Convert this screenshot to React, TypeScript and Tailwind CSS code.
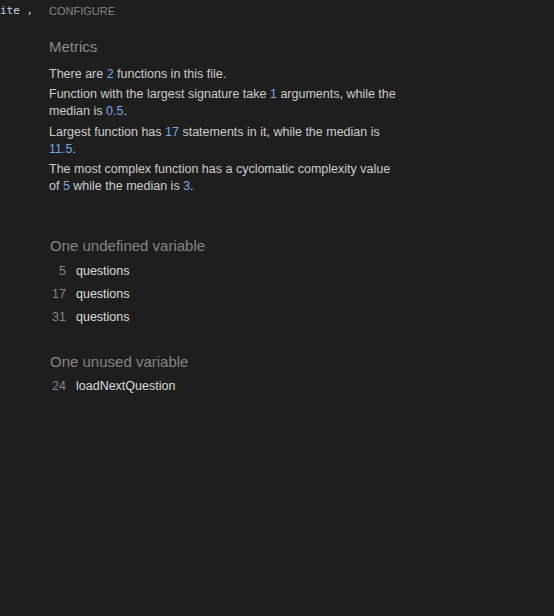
import type React from "react";

const sans = "font-['Liberation_Sans','Helvetica_Neue',Arial,sans-serif]";

const Num = ({ children }: { children: React.ReactNode }) => (
  <span className="text-[#75a7e4]">{children}</span>
);

interface Item {
  line: number;
  name: string;
}

const undefinedVars: Item[] = [
  { line: 5, name: "questions" },
  { line: 17, name: "questions" },
  { line: 31, name: "questions" },
];

const unusedVars: Item[] = [{ line: 24, name: "loadNextQuestion" }];

const VarList = ({ title, items }: { title: string; items: Item[] }) => (
  <div className="flex flex-col">
    <h2 className="pl-px text-[15px] leading-[20px] text-[#858585]">{title}</h2>
    <ul className="mt-[3.5px] flex flex-col">
      {items.map((item, i) => (
        <li key={i} className="flex h-[23px] items-center text-[12.5px]">
          <span className="w-[17px] text-right text-[#858585]">{item.line}</span>
          <span className="ml-[10px] text-[#dcdcdc]">{item.name}</span>
        </li>
      ))}
    </ul>
  </div>
);

export default function App() {
  return (
    <div className={`h-[616px] w-[554px] overflow-hidden bg-[#1e1e1e] ${sans}`}>
      {/* tab strip */}
      <div className="flex h-[22px] items-center">
        <span className="w-[49px] font-['DejaVu_Sans_Mono',monospace] text-[11px] text-[#c9d1e3]">
          ite ,
        </span>
        <span className="text-[11px] uppercase text-[#858585]">Configure</span>
      </div>

      <div className="pl-[49px]">
        {/* metrics */}
        <section className="mt-[15px]">
          <h2 className="text-[15px] leading-[20px] text-[#8a8a8a]">Metrics</h2>
          <div className="mt-[8.5px] flex w-[351px] flex-col gap-[3.5px] text-[12.5px] leading-[17px] text-[#cccccc]">
            <p>
              There are <Num>2</Num> functions in this file.
            </p>
            <p>
              Function with the largest signature take <Num>1</Num> arguments, while the median
              is <Num>0.5</Num>.
            </p>
            <p>
              Largest function has <Num>17</Num> statements in it, while the median is{" "}
              <Num>11.5</Num>.
            </p>
            <p>
              The most complex function has a cyclomatic complexity value of <Num>5</Num> while
              the median is <Num>3</Num>.
            </p>
          </div>
        </section>

        <div className="mt-[41px]">
          <VarList title="One undefined variable" items={undefinedVars} />
        </div>
        <div className="mt-[23px]">
          <VarList title="One unused variable" items={unusedVars} />
        </div>
      </div>
    </div>
  );
}
